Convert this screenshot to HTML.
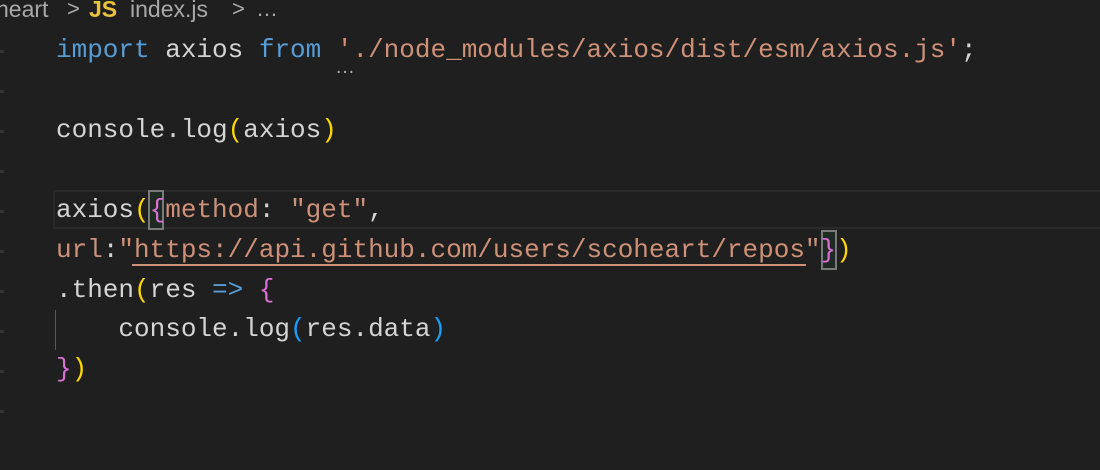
<!DOCTYPE html>
<html><head><style>
body{margin:0;width:1100px;height:470px;background:#1f1f1f;overflow:hidden;position:relative;font-family:"Liberation Mono",monospace;}
.bc{position:absolute;top:-6px;font:22px "Liberation Sans",sans-serif;color:#a9a9a9;white-space:pre;line-height:30px}
.js{color:#e8c33b;font-weight:bold}
.l{position:absolute;left:56px;font-size:26px;line-height:40px;height:40px;white-space:pre;color:#d4d4d4}
.k{color:#569cd6}.s{color:#ce9178}.y{color:#ffd700}.p{color:#da70d6}.b{color:#179fff}
.cur{position:absolute;left:53px;top:190px;width:1060px;height:35px;border:2px solid #2a2a2a}
.bx{position:absolute;width:12px;height:36px;border:2px solid #7a7a7a;background:#1f2a22}
.g{position:absolute;left:0;width:4px;height:3px;background:#333}
</style></head><body>
<div class="bc" style="left:-4px;font-size:23px">heart</div>
<div class="bc" style="left:67px">&gt;</div>
<div class="bc js" style="left:89px;font-size:23px">JS</div>
<div class="bc" style="left:130px;font-size:23px">index.js</div>
<div class="bc" style="left:232px">&gt;</div>
<div class="bc" style="left:256px">…</div>
<div class="cur"></div>
<div class="bx" style="left:148px;top:190px"></div>
<div class="bx" style="left:821px;top:230px"></div>
<div class="l" style="top:30px"><span class="k">import</span> axios <span class="k">from</span> <span class="s">'./node_modules/axios/dist/esm/axios.js'</span>;</div>
<div style="position:absolute;left:335px;top:56px;color:#aaa;font:20px 'Liberation Sans',sans-serif;">…</div>
<div class="l" style="top:110px">console.log<span class="y">(</span>axios<span class="y">)</span></div>
<div class="l" style="top:190px">axios<span class="y">(</span><span class="p">{</span><span class="s">method</span>: <span class="s">"get"</span>,</div>
<div class="l" style="top:230px"><span class="s">url</span>:<span class="s">"https://api.github.com/users/scoheart/repos"</span><span class="p">}</span><span class="y">)</span></div>
<div style="position:absolute;left:132px;top:264px;width:674px;height:2px;background:#ce9178"></div>
<div class="l" style="top:270px">.then<span class="y">(</span>res <span class="k">=&gt;</span> <span class="p">{</span></div>
<div style="position:absolute;left:55px;top:310px;width:1px;height:40px;background:#5a5a5a"></div>
<div class="l" style="top:309px">    console.log<span class="b">(</span>res.data<span class="b">)</span></div>
<div class="l" style="top:349px"><span class="p">}</span><span class="y">)</span></div>
<div class="g" style="top:50px"></div><div class="g" style="top:90px"></div><div class="g" style="top:130px"></div><div class="g" style="top:170px"></div><div class="g" style="top:210px"></div><div class="g" style="top:250px"></div><div class="g" style="top:290px"></div><div class="g" style="top:330px"></div><div class="g" style="top:370px"></div><div class="g" style="top:410px"></div>
</body></html>
